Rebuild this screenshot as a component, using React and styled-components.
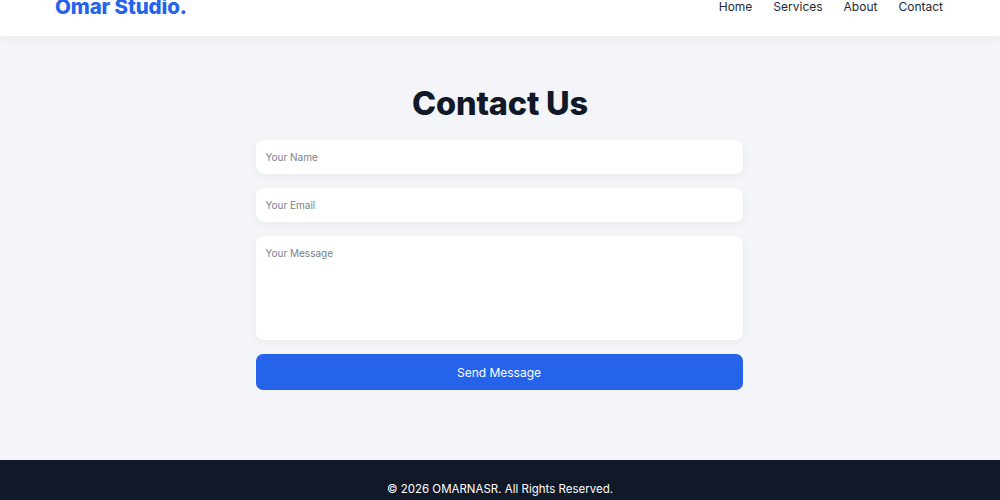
import React from "react";
import styled, { createGlobalStyle } from "styled-components";

const Global = createGlobalStyle`
  * { box-sizing: border-box; }
  html, body { margin: 0; padding: 0; }
  body {
    background: #f3f5f9;
    font-family: "Inter", "Noto Sans", sans-serif;
    color: #111827;
  }
`;

const Header = styled.header`
  height: 36px;
  background: #ffffff;
  box-shadow: 0 2px 10px rgba(15, 23, 42, 0.05);
  display: flex;
  align-items: flex-start;
  justify-content: space-between;
  padding: 0 57px 0 55px;
  position: relative;
  z-index: 1;
`;

const Logo = styled.div`
  font-size: 20.5px;
  font-weight: 800;
  color: #2563eb;
  line-height: 16px;
  margin-top: -1px;
  letter-spacing: -0.1px;
`;

const Nav = styled.nav`
  display: flex;
  gap: 21px;
`;

const NavLink = styled.a`
  font-size: 12px;
  font-weight: 400;
  color: #1f2937;
  text-decoration: none;
  line-height: 14px;
`;

const Main = styled.main`
  padding: 44px 0 70px;
  display: flex;
  flex-direction: column;
  align-items: center;
`;

const Title = styled.h1`
  margin: 0 0 12px;
  font-size: 32.5px;
  line-height: 48px;
  font-weight: 800;
  color: #111827;
  letter-spacing: -0.2px;
`;

const Form = styled.form`
  width: 487px;
  margin-left: -2px;
  display: flex;
  flex-direction: column;
  gap: 14px;
`;

const fieldStyle = `
  width: 100%;
  border: none;
  outline: none;
  background: #ffffff;
  border-radius: 8px;
  box-shadow: 0 2px 8px rgba(15, 23, 42, 0.05);
  font-family: "Inter", "Noto Sans", sans-serif;
  font-size: 10px;
  color: #374151;
  padding: 0 10px;
  &::placeholder { color: #7b7f87; }
`;

const Input = styled.input`
  ${fieldStyle}
  height: 34px;
`;

const TextArea = styled.textarea`
  ${fieldStyle}
  height: 104px;
  padding-top: 11px;
  resize: none;
`;

const Button = styled.button`
  height: 36px;
  border: none;
  border-radius: 7px;
  background: #2563eb;
  color: #ffffff;
  font-family: "Inter", "Noto Sans", sans-serif;
  font-size: 12px;
  font-weight: 400;
  cursor: pointer;
`;

const Footer = styled.footer`
  background: #111827;
  color: #ffffff;
  text-align: center;
  padding: 22px 0 20px;
  font-size: 11.5px;
  line-height: 14px;
`;

export default function App() {
  return (
    <>
      <Global />
      <Header>
        <Logo>Omar Studio.</Logo>
        <Nav>
          <NavLink href="#">Home</NavLink>
          <NavLink href="#">Services</NavLink>
          <NavLink href="#">About</NavLink>
          <NavLink href="#">Contact</NavLink>
        </Nav>
      </Header>
      <Main>
        <Title>Contact Us</Title>
        <Form onSubmit={(e) => e.preventDefault()}>
          <Input placeholder="Your Name" />
          <Input placeholder="Your Email" />
          <TextArea placeholder="Your Message" />
          <Button type="submit">Send Message</Button>
        </Form>
      </Main>
      <Footer>© 2026 OMARNASR. All Rights Reserved.</Footer>
    </>
  );
}
